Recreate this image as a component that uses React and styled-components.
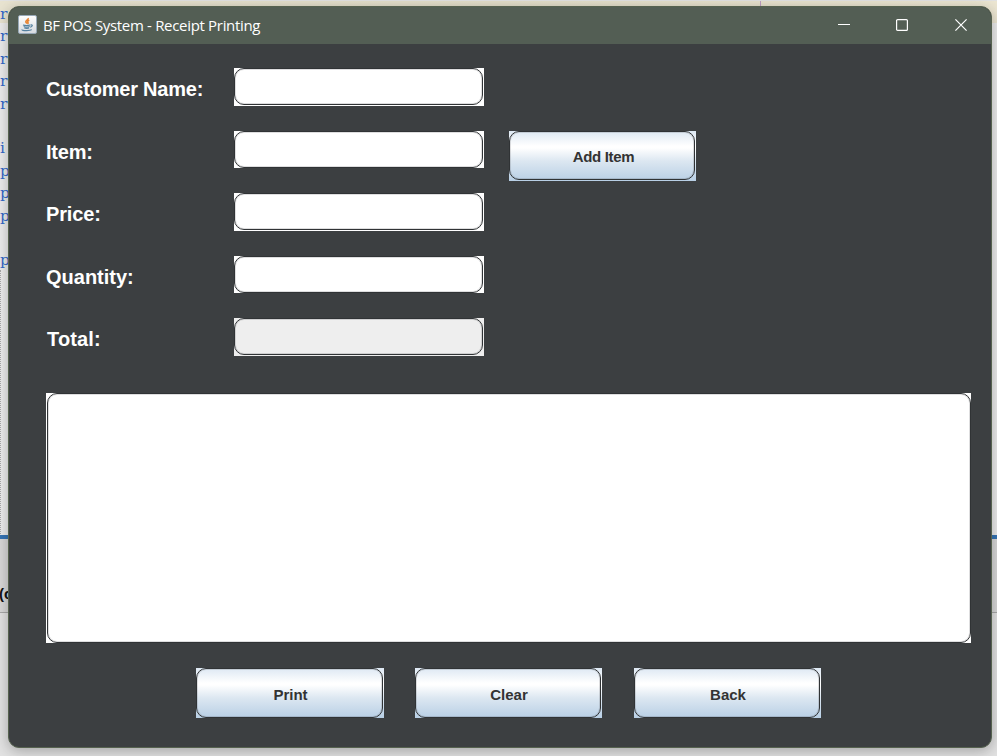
import React from "react";
import styled, { createGlobalStyle } from "styled-components";

const GlobalStyle = createGlobalStyle`
  * { box-sizing: border-box; }
  body { margin: 0; overflow: hidden; font-family: "Liberation Sans", Arial, sans-serif; }
`;

const Desktop = styled.div`
  display: grid;
  grid-template: 756px / 997px;
  overflow: hidden;
  > * { grid-area: 1 / 1; }
`;

const Ide = styled.div`
  display: grid;
  grid-template-columns: 997px;
  grid-template-rows: 534px 4px 73px 1px 1fr;
  padding-top: 1px;
  background: #e2e2e2;
  overflow: hidden;
`;

const Code = styled.div`
  background: #ececec;
  overflow: hidden;
`;

const CodeLine = styled.div`
  display: flex;
  justify-content: space-between;
  height: 22.4px;
  padding-right: 236px;
  font: 15.5px/27px "DejaVu Serif", serif;
  color: #3468c8;
  background: ${(p) => (p.$current ? "linear-gradient(90deg, #e8e3d0, #e3deca 50%, #ece6d2)" : "transparent")};
`;

const Margin = styled.span`
  width: 1px;
  background: #c0a0c4;
`;

const Guide = styled.div`
  width: 1px;
  height: 266px;
  border-left: 1px dotted #a8a8a8;
`;

const SplitBar = styled.div`
  background: #3574b4;
`;

const Output = styled.div`
  background: #d8d8d8;
  color: #111;
  font: bold 15px/20px "Liberation Sans", sans-serif;
  padding-top: 45px;
  text-indent: -1px;
`;

const Rule = styled.div`
  background: #a8a8a8;
`;

const Window = styled.main`
  margin: 6px 5px 8px 8px;
  width: 984px;
  height: 742px;
  border: 1px solid #56624f;
  border-radius: 11px;
  background: #3c3f41;
  overflow: hidden;
  box-shadow: 0 3px 14px rgba(0, 0, 0, 0.28);
`;

const TitleBar = styled.header`
  display: flex;
  align-items: center;
  height: 37px;
  padding: 0 1px 0 10px;
  background: #535e54;
  color: #fff;
`;

const AppIcon = styled.svg`
  margin: -3px 0 0 -1px;
`;

const Title = styled.span`
  flex: 1;
  margin-left: 6px;
  margin-top: -2px;
  font: 15px/20px "Open Sans", "Noto Sans", sans-serif;
  letter-spacing: -0.32px;
  white-space: nowrap;
`;

const WindowButton = styled.button`
  display: grid;
  place-items: center;
  width: 58.5px;
  height: 37px;
  padding: 0 0 2px;
  border: 0;
  background: none;
  color: #fff;
`;

const Content = styled.div`
  padding: 24px 20px 0 37px;
`;

const Form = styled.div`
  display: grid;
  grid-template-columns: 188px 250px 188px;
  grid-template-rows: repeat(5, 62.5px);
  align-items: start;
`;

const Label = styled.label`
  grid-column: 1;
  font-size: 20px;
  font-weight: bold;
  line-height: 24px;
  margin-top: 9px;
  padding-left: ${(p) => p.$indent || 0}px;
  letter-spacing: ${(p) => p.$spacing || 0}px;
  color: #fff;
  white-space: nowrap;
`;

const Frame = styled.div`
  height: ${(p) => p.$height}px;
  padding: 0 1px ${(p) => (p.$height === 37 ? 0 : 1)}px 0;
  background: ${(p) => p.$fill || "#fff"};
`;

const lineStyle = `
  display: block;
  width: 100%;
  height: 100%;
  margin: 0;
  border: 1px solid #303335;
  border-radius: 10px;
  box-shadow: inset 0 0 0 1px rgba(48, 51, 53, 0.16);
  background: transparent;
  outline: none;
  resize: none;
`;

const Input = styled.input`${lineStyle}`;
const Receipt = styled.textarea`${lineStyle}`;

const ButtonFrame = styled.div`
  width: ${(p) => p.$width || 188}px;
  height: 50px;
  padding: 0 1px 1px 0;
  background: linear-gradient(#dde8f3 0%, #fff 30%, #fff 34%, #dce7f1 60%, #b8cfe5 100%);
`;

const Button = styled.button`
  ${lineStyle}
  padding: 2px 0 0 2px;
  color: #333;
  font: bold 15px "Liberation Sans", Arial, sans-serif;
`;

const AddSlot = styled.div`
  grid-area: 2 / 3;
  padding-left: 25px;
  width: 213px;
`;

const AddButton = styled(Button)`
  padding-left: 3px;
  letter-spacing: -0.35px;
`;

const ReceiptFrame = styled.div`
  width: 925px;
  height: 250px;
  margin-top: 12.5px;
  padding-left: 1px;
  background: #fff;
`;

const Actions = styled.div`
  display: flex;
  gap: 31px;
  margin: 25px 0 0 150px;
  ${ButtonFrame} { padding-bottom: 0; }
  ${ButtonFrame}:last-child { margin-left: 1px; }
`;

const fields = [
  { label: "Customer Name:", height: 38, spacing: -0.2 },
  { label: "Item:", height: 37, spacing: -0.2 },
  { label: "Price:", height: 38, spacing: -0.15 },
  { label: "Quantity:", height: 37 },
  { label: "Total:", height: 38, fill: "#eee", spacing: 0.15, indent: 1 },
];

const code = ["r", "r", "r", "r", "r", "", "i", "p", "p", "p", "", "p"];

function JavaIcon() {
  return (
    <AppIcon width="19" height="19" viewBox="0 0 19 19" fill="none">
      <defs>
        <linearGradient id="tile" x2="0" y2="1">
          <stop stopColor="#fff" />
          <stop offset="1" stopColor="#d5d9df" />
        </linearGradient>
      </defs>
      <rect x=".5" y=".5" width="18" height="18" rx="1.5" fill="url(#tile)" stroke="#98a9b8" />
      <path d="M10.2 3c.8 1.8-3.2 2.6-2.4 4.2.3.6 1 1 1 1.6M11.3 5.2c-2.2.8-2 1.6-1.3 2.3.4.5.1.9-.5 1.3" stroke="#e88432" strokeWidth="1.5" />
      <path d="M5 10c2 .6 5 .6 7.2 0M5.7 11.5c1.8.7 4.4.6 6 0M6.3 13c1.6.5 3.5.5 4.8 0M12.5 10c2.8-.6 2.1 1.7-.4 2.2M4 14.6c-.7 1.3 8.2 1.5 9.8.1" stroke="#53809f" strokeWidth="1.1" />
    </AppIcon>
  );
}

export default function App() {
  return (
    <>
      <GlobalStyle />
      <Desktop>
        <Ide>
          <Code>
            {code.map((c, i) => (
              <CodeLine key={i} $current={i === 0}>
                {c}
                {i === 0 && <Margin />}
              </CodeLine>
            ))}
            <Guide />
          </Code>
          <SplitBar />
          <Output>(c</Output>
          <Rule />
        </Ide>
        <Window>
          <TitleBar>
            <JavaIcon />
            <Title>BF POS System - Receipt Printing</Title>
            <WindowButton aria-label="Minimize">
              <svg width="12" height="12"><path d="M0 5.5h12" stroke="currentColor" /></svg>
            </WindowButton>
            <WindowButton aria-label="Maximize">
              <svg width="12" height="12"><rect x=".6" y=".6" width="10.8" height="10.8" rx="1" fill="none" stroke="currentColor" strokeWidth="1.2" /></svg>
            </WindowButton>
            <WindowButton aria-label="Close">
              <svg width="12" height="12"><path d="M.4.4l11.2 11.2M11.6.4L.4 11.6" stroke="currentColor" strokeWidth="1.2" /></svg>
            </WindowButton>
          </TitleBar>
          <Content>
            <Form>
              {fields.map((f, i) => (
                <React.Fragment key={f.label}>
                  <Label htmlFor={`f${i}`} $spacing={f.spacing} $indent={f.indent}>{f.label}</Label>
                  <Frame $height={f.height} $fill={f.fill}>
                    <Input id={`f${i}`} readOnly={i === 4} />
                  </Frame>
                </React.Fragment>
              ))}
              <AddSlot>
                <ButtonFrame $width={187}><AddButton>Add Item</AddButton></ButtonFrame>
              </AddSlot>
            </Form>
            <ReceiptFrame><Receipt readOnly /></ReceiptFrame>
            <Actions>
              <ButtonFrame><Button>Print</Button></ButtonFrame>
              <ButtonFrame $width={187}><Button>Clear</Button></ButtonFrame>
              <ButtonFrame $width={187}><Button>Back</Button></ButtonFrame>
            </Actions>
          </Content>
        </Window>
      </Desktop>
    </>
  );
}
